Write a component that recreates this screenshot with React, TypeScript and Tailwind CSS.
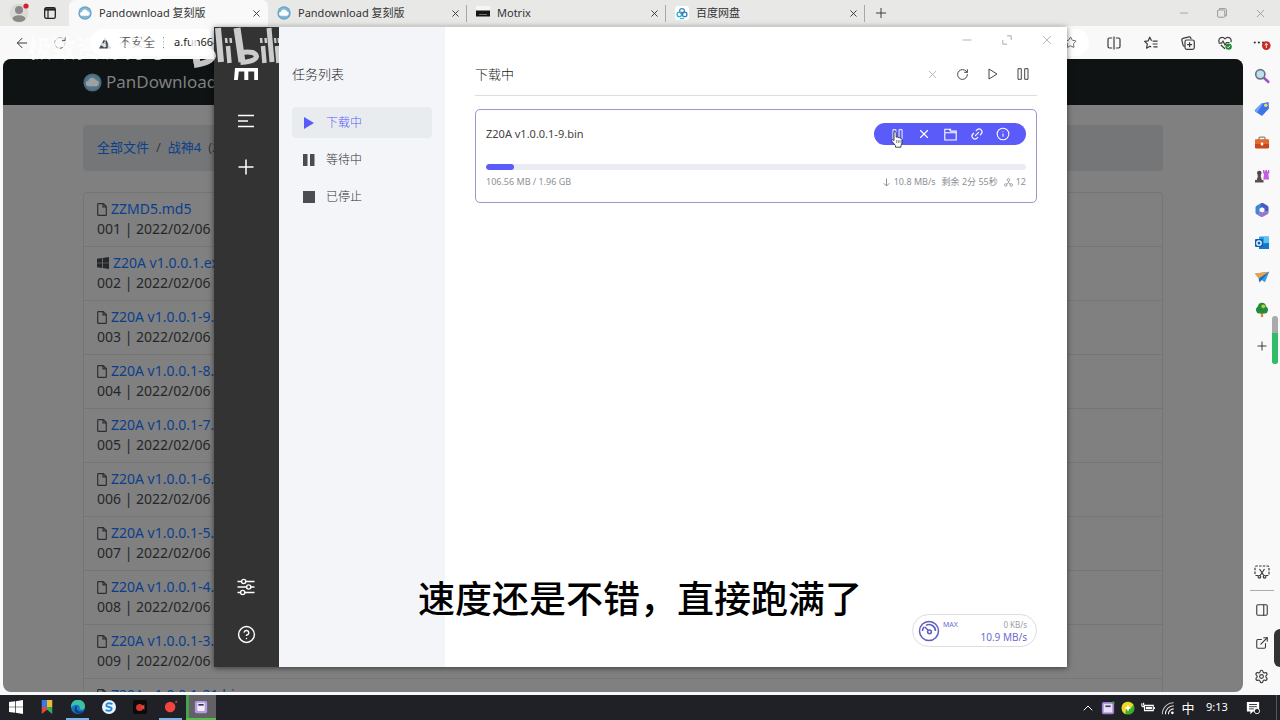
import React from "react";
import type { ReactNode } from "react";
import {
  ArrowLeft,
  ChevronUp,
  CircleHelp,
  ExternalLink,
  Info,
  Link2,
  Minus,
  PanelRight,
  Plus,
  RotateCw,
  Settings,
  Star,
  X,
} from "lucide-react";

const BLUE = "#5b5bfa";

function CloudLogo({ className }: { className: string }) {
  return (
    <svg viewBox="0 0 18 18" className={className} aria-hidden="true">
      <circle cx="9" cy="9" r="8.6" fill="#6aa5c9" />
      <circle cx="9" cy="9" r="7" fill="#84b8d6" />
      <path d="M5.3 12.6a2.5 2.5 0 0 1-.3-5 3.9 3.9 0 0 1 7.4-.7 2.9 2.9 0 0 1 .5 5.7z" fill="#fff" />
    </svg>
  );
}

function MotrixFavicon() {
  return (
    <svg viewBox="0 0 14 14" className="size-[14px]" aria-hidden="true">
      <rect width="14" height="5" fill="#f6f6f6" />
      <rect y="4.5" width="14" height="6" fill="#161616" />
      <path d="M3 8.5h8" stroke="#8a8a8a" strokeWidth=".8" />
    </svg>
  );
}

function NetdiskFavicon() {
  return (
    <svg viewBox="0 0 14 14" className="size-[14px]" aria-hidden="true">
      <rect width="14" height="14" rx="3" fill="#fff" />
      <g fill="none" strokeWidth="1.3">
        <circle cx="7" cy="5" r="2.4" stroke="#2f8fd8" />
        <circle cx="4.3" cy="8.4" r="2.2" stroke="#27b3c9" />
        <circle cx="9.7" cy="8.4" r="2.2" stroke="#2a80c9" />
      </g>
      <circle cx="7" cy="6.4" r="1" fill="#e2504c" />
      <path d="M5 12.6h4" stroke="#27a9c9" strokeWidth="1" />
    </svg>
  );
}

type Tab = { label: string; icon: ReactNode; active?: boolean };
const tabs: Tab[] = [
  { label: "Pandownload 复刻版", icon: <CloudLogo className="size-[14px]" />, active: true },
  { label: "Pandownload 复刻版", icon: <CloudLogo className="size-[14px]" /> },
  { label: "Motrix", icon: <MotrixFavicon /> },
  { label: "百度网盘", icon: <NetdiskFavicon /> },
];

function TabBar() {
  return (
    <header className="flex h-[26px] shrink-0 items-center bg-[#e8e8e7] text-[#333]">
      <button aria-label="用户" className="flex w-[38px] justify-center">
        <svg viewBox="0 0 20 20" className="size-5">
          <circle cx="10" cy="10" r="9.5" fill="#dcdad7" />
          <circle cx="10" cy="7" r="4" fill="#8b8986" />
          <ellipse cx="10" cy="15.6" rx="6.4" ry="3.4" fill="#8b8986" />
          <circle cx="17" cy="3" r="2.6" fill="#d5202c" />
        </svg>
      </button>
      <button aria-label="标签页操作" className="flex w-[31px] justify-start pl-[6px]">
        <svg viewBox="0 0 12 12" className="size-3" fill="none" stroke="#222">
          <rect x=".7" y=".7" width="10.6" height="10.6" rx="1.6" strokeWidth="1.3" />
          <path d="M1 2.4h10" strokeWidth="2.4" />
          <path d="M4 3v8" strokeWidth="1.2" />
        </svg>
      </button>
      <nav className="flex h-full items-center">
        {tabs.map((t, i) => (
          <div
            key={i}
            className={
              t.active
                ? "flex h-full w-[199px] items-center rounded-t-md bg-[#f9f9f9] pl-[9px] pr-[5px]"
                : "flex h-[17px] w-[199px] items-center border-r border-[#a8a8a8] pl-[9px] pr-[4px]"
            }
          >
            <button className="flex flex-1 items-center gap-[7px] text-left text-[11px]">
              {t.icon}
              {t.label}
            </button>
            <button aria-label="关闭标签页" className="p-px">
              <X className="size-[11px]" strokeWidth={2} />
            </button>
          </div>
        ))}
      </nav>
      <button aria-label="新建标签页" className="ml-[8px]">
        <Plus className="size-4" strokeWidth={1.4} />
      </button>
      <div className="ml-auto flex text-[#999]">
        <button aria-label="最小化" className="flex w-[38px] justify-center">
          <Minus className="size-3" strokeWidth={1.6} />
        </button>
        <button aria-label="还原" className="flex w-[38px] items-center justify-center">
          <svg viewBox="0 0 10 10" className="size-[10px]" fill="none" stroke="currentColor">
            <rect x=".6" y="2" width="7.2" height="7.2" rx="1" />
            <path d="M2.4 2V.6h5.8q1.2 0 1.2 1.2v6H8" />
          </svg>
        </button>
        <button aria-label="关闭" className="flex w-[39px] justify-center">
          <X className="size-[13px]" strokeWidth={1.6} />
        </button>
      </div>
    </header>
  );
}

function ToolButton({ label, children }: { label: string; children: ReactNode }) {
  return (
    <button aria-label={label} className="flex w-[37px] justify-center">
      {children}
    </button>
  );
}

function Toolbar() {
  return (
    <div className="flex h-[33px] shrink-0 items-center bg-[#f9f9f9] text-[#3b3b3b]">
      <button aria-label="返回" className="flex w-[44px] justify-center">
        <ArrowLeft className="size-4" strokeWidth={1.5} />
      </button>
      <button aria-label="刷新" className="flex w-[32px] justify-center">
        <RotateCw className="size-[14px]" strokeWidth={1.5} />
      </button>
      <div className="ml-[14px] mr-[6px] flex h-[27px] min-w-0 flex-1 items-center rounded-full bg-white pl-[9px] pr-[12px]">
        <svg viewBox="0 0 12 12" className="size-3 shrink-0">
          <path d="M6 .5 12 11.5H0z" fill="#4a4a4a" />
          <path d="M6 4.4v3.4M6 8.8v1.3" stroke="#fff" strokeWidth="1.2" />
        </svg>
        <span className="ml-[8px] shrink-0 text-[12px] text-[#666]">不安全</span>
        <span className="mx-[8px] h-3 border-l border-dashed border-[#888]" />
        <input
          aria-label="地址"
          defaultValue="a.fun66-"
          className="ml-[2px] min-w-0 flex-1 bg-transparent text-[11px] text-[#222] outline-none"
        />
        <Star className="size-[13px] shrink-0 text-[#666]" strokeWidth={1.8} />
      </div>
      <ToolButton label="分屏">
        <svg viewBox="0 0 14 14" className="size-[14px]" fill="none" stroke="currentColor" strokeWidth="1.2">
          <path d="M5.2 2H2.4Q1 2 1 3.4v7.2Q1 12 2.4 12h2.8M8.8 2h2.8Q13 2 13 3.4v7.2q0 1.4-1.4 1.4H8.8M7 .5v13" />
        </svg>
      </ToolButton>
      <ToolButton label="收藏夹">
        <svg viewBox="0 0 14 14" className="size-[14px]" fill="none" stroke="currentColor" strokeWidth="1.2" strokeLinejoin="round">
          <path d="M7.6 4.7 5.7 1.2 4.1 4.9.6 5.3l2.7 2.6-.7 4.3 3.2-1.9 1.4.8M8.6 5.2h5M8.6 8h5M9.4 10.8h4.2" />
        </svg>
      </ToolButton>
      <ToolButton label="集锦">
        <svg viewBox="0 0 14 14" className="size-[14px]" fill="none" stroke="currentColor" strokeWidth="1.2">
          <path d="M3.6 10.4Q2.2 10.4 2 9L.8 4Q.6 2.6 2 2.3L8 .9q1.4-.3 1.8 1.1l.2 1" />
          <rect x="4" y="4" width="9.3" height="9.3" rx="1.8" />
          <path d="M8.6 6.2v5M6.1 8.7h5" />
        </svg>
      </ToolButton>
      <ToolButton label="浏览器概要">
        <svg viewBox="0 0 14 14" className="size-[14px]" fill="none" stroke="currentColor" strokeWidth="1.2" strokeLinejoin="round">
          <path d="M1.2 6.2C-.2 2.5 4-.6 7 2.8c3-3.4 7.2-.3 5.800 3.400M.6 7.200h3L5 5l2 4 1.500-2.500h3M2.800 9 7 12.800" />
          <circle cx="10.6" cy="10.6" r="3.2" fill="#1c8a32" stroke="none" />
          <path d="m9 10.6 1.2 1.2 2-2.2" stroke="#fff" strokeWidth=".9" />
        </svg>
      </ToolButton>
      <ToolButton label="设置及其他">
        <svg viewBox="0 0 18 14" className="h-[14px] w-[18px]">
          <g fill="#333">
            <circle cx="1.8" cy="6.5" r="1.1" />
            <circle cx="5.9" cy="6.5" r="1.1" />
            <circle cx="10" cy="6.5" r="1.1" />
          </g>
          <circle cx="13.3" cy="9.6" r="4.3" fill="#c8281e" />
          <path d="M13.3 12V7.500m-1.600 1.600 1.600-1.600 1.600 1.600" fill="none" stroke="#fff" strokeWidth=".9" />
        </svg>
      </ToolButton>
    </div>
  );
}

const files = [
  { name: "ZZMD5.md5", windows: false },
  { name: "Z20A v1.0.0.1.exe", windows: true },
  { name: "Z20A v1.0.0.1-9.bin", windows: false },
  { name: "Z20A v1.0.0.1-8.bin", windows: false },
  { name: "Z20A v1.0.0.1-7.bin", windows: false },
  { name: "Z20A v1.0.0.1-6.bin", windows: false },
  { name: "Z20A v1.0.0.1-5.bin", windows: false },
  { name: "Z20A v1.0.0.1-4.bin", windows: false },
  { name: "Z20A v1.0.0.1-3.bin", windows: false },
  { name: "Z20A v1.0.0.1-21.bin", windows: false },
];

function FileIcon({ windows }: { windows: boolean }) {
  return windows ? (
    <svg viewBox="0 0 12 12" className="mr-[4px] size-3" fill="#26292c">
      <path d="M0 1.7 5 1v4.700H0zM5.700.9 12 0v5.700H5.700zM0 6.300h5V11l-5-.7zM5.700 6.300H12V12l-6.300-.9z" />
    </svg>
  ) : (
    <svg viewBox="0 0 10 13" className="mr-[4px] h-[13px] w-[10px]" fill="none" stroke="#2c2f32" strokeWidth="1.2">
      <path d="M.7 1.200q0-.6.6-.6h5l3 3v8.200q0 .6-.6.6H1.300q-.6 0-.6-.6zM6 .8v3.100h3.200" />
    </svg>
  );
}

function DimmedPage() {
  return (
    <main className="ml-[3px] min-w-0 flex-1 overflow-hidden rounded-lg bg-[#808080] text-[14px]">
      <div className="h-[46px] bg-[#0f1314]">
        <div className="mx-auto flex h-full w-full max-w-[1080px] items-center gap-[4px] text-[17px] text-[#808080]">
          <CloudLogo className="size-[19px] opacity-60" />
          PanDownload
        </div>
      </div>
      <div className="mx-auto w-full max-w-[1080px] pt-[20px]">
        <nav className="flex h-[46px] items-center gap-[7px] rounded bg-[#747677] px-[14px] text-[13px] text-[#0b3f8c]">
          <a href="#all">全部文件</a>
          <span className="text-[#36393d]">/</span>
          <a href="#game">战神4</a>
          <span className="text-[#36393d]">(2022)</span>
        </nav>
        <ul className="mt-[21px] rounded-t border border-b-0 border-[#757575]">
          {files.map((f, i) => (
            <li key={f.name} className="h-[54px] border-b border-[#757575] px-[13px] pt-[6px] leading-5">
              <a href={"#" + f.name} className="flex items-center text-[#0b3f8c]">
                <FileIcon windows={f.windows} />
                {f.name}
              </a>
              <p className="text-[#24272a]">{String(i + 1).padStart(3, "0")} | 2022/02/06 17:20</p>
            </li>
          ))}
        </ul>
      </div>
    </main>
  );
}

const sideApps: { label: string; art: ReactNode }[] = [
  {
    label: "搜索",
    art: (
      <>
        <path d="m9.5 9.5 4.700 4.300" stroke="#a24fd0" strokeWidth="2.6" strokeLinecap="round" />
        <circle cx="6.3" cy="6.3" r="4.6" fill="#bfe0f0" stroke="#6d7680" strokeWidth="1.7" />
      </>
    ),
  },
  {
    label: "购物",
    art: (
      <>
        <path d="m1 9 6.500-6.600L14.500 1l.5 6.600L8.500 14.500Q7.500 15 6.500 14L1.200 10.500Q.5 9.800 1 9z" fill="#3f74e8" />
        <path d="m1 9 6.500-6.600 1.800-.3L3 11.700l-1.800-1.200Q.5 9.800 1 9z" fill="#6fa4fa" />
        <circle cx="11.8" cy="4.2" r="1.7" fill="#f4dc4e" />
      </>
    ),
  },
  {
    label: "工具",
    art: (
      <>
        <path d="M5 5V3q0-.9.900-.9h4.200q.9 0 .9.900v2" fill="none" stroke="#84898c" strokeWidth="1.3" />
        <rect x="1" y="4.5" width="14" height="9" rx="1.2" fill="#c64a1c" />
        <path d="M1 4.500h14V9H1z" fill="#e46a2c" />
        <rect x="6.8" y="7.6" width="2.4" height="2.8" fill="#fff" />
      </>
    ),
  },
  {
    label: "游戏",
    art: (
      <>
        <path d="M9 2h1.400v1.400h1V2H13v1.400h1V2h1.300v3.500h-1l.7 6H9.300l.8-6H9z" fill="#c25ee0" />
        <circle cx="5.3" cy="5" r="2.3" fill="#4a4548" />
        <path d="M3.300 7h4l-.6 1 1.200 4H9.500v2.500H1V12h1.700l1.200-4z" fill="#57504f" />
      </>
    ),
  },
  {
    label: "Microsoft 365",
    art: (
      <g fill="none" strokeWidth="4" strokeLinejoin="round">
        <path d="M8 13 3.500 10.500v-5L8 3" stroke="#3f86d6" />
        <path d="M7 3.200 8.500 3l4 2.500v4" stroke="#4a5cbd" />
        <path d="M12.500 9v1.500L8 13l-3.500-2" stroke="#9478d4" />
      </g>
    ),
  },
  {
    label: "Outlook",
    art: (
      <>
        <rect x="5" y="1.5" width="10" height="12.5" rx="1" fill="#2aa0e8" />
        <path d="M10 1.500h5V8h-5z" fill="#59c5f7" />
        <path d="m5 9 10-1v6H5z" fill="#1478c8" />
        <rect x="1" y="4" width="8" height="8" rx="1" fill="#0d5fb0" />
        <circle cx="5" cy="8" r="2.2" fill="none" stroke="#fff" strokeWidth="1.3" />
      </>
    ),
  },
  {
    label: "Drop",
    art: (
      <>
        <path d="m1 4.500 14.200-1.700L11 13.300 7.500 11l-2 2.200-.9-4z" fill="#3b9be0" />
        <path d="M1 4.500 15.200 2.800 4.600 9.200z" fill="#ef9f44" />
        <path d="M15.200 2.800 5.500 13.200l-.6-3.500z" fill="#1d6bb6" />
      </>
    ),
  },
  {
    label: "种树",
    art: (
      <>
        <path d="M6.800 10h2.400v5H6.800z" fill="#e08a32" />
        <path d="M8 .8a4.500 4.500 0 0 1 4.200 3.700A3.800 3.800 0 0 1 11 11.500H5A3.800 3.800 0 0 1 3.800 4.500 4.500 4.500 0 0 1 8 .8z" fill="#248a3c" />
        <circle cx="9.3" cy="4.3" r="1.9" fill="#b6cf3a" />
      </>
    ),
  },
];

function EdgeSidebar() {
  return (
    <aside className="flex w-[37px] shrink-0 flex-col items-center bg-[#f9f9f9] text-[#3b3b3b]">
      <div className="mt-[9px] flex h-[250px] flex-col justify-between">
        {sideApps.map((a) => (
          <button key={a.label} aria-label={a.label}>
            <svg viewBox="0 0 16 16" className="size-4" fill="none">
              {a.art}
            </svg>
          </button>
        ))}
      </div>
      <button aria-label="添加" className="mt-[21px]">
        <Plus className="size-[14px]" strokeWidth={1.7} />
      </button>
      <button aria-label="截图" className="mt-auto">
        <svg viewBox="0 0 16 14" className="h-[14px] w-4" fill="none" stroke="currentColor" strokeWidth="1.2">
          <path d="M4 10.500H2.500Q1 10.500 1 9V2.500Q1 1 2.500 1h11Q15 1 15 2.500V9q0 1.500-1.500 1.500H12" strokeDasharray="2.5 1.2" />
          <path d="m5.500 4 4.300 6.500M10.500 4l-4.300 6.500" />
          <circle cx="5.4" cy="11.8" r="1.3" />
          <circle cx="10.6" cy="11.8" r="1.3" />
        </svg>
      </button>
      <div className="mb-[12px] mt-[11px] w-[24px] border-t border-[#aaa]" />
      <div className="mb-[8px] flex flex-col items-center gap-[19px]">
        <button aria-label="侧栏">
          <PanelRight className="size-[14px]" strokeWidth={1.9} />
        </button>
        <button aria-label="外部打开">
          <ExternalLink className="size-[14px]" strokeWidth={1.9} />
        </button>
        <button aria-label="设置">
          <Settings className="size-[15px]" strokeWidth={1.8} />
        </button>
      </div>
    </aside>
  );
}

function TaskPause({ className }: { className: string }) {
  return (
    <svg viewBox="0 0 12 12" className={className} fill="none" stroke="currentColor">
      <path d="M1 .7h3.300v10.600H1zM7.700.7H11v10.600H7.700z" />
    </svg>
  );
}

function Rail() {
  return (
    <div className="flex w-[65px] shrink-0 flex-col items-center bg-[#333] pr-px text-white">
      <svg viewBox="0 0 24 12" className="mt-[41px] h-3 w-6" aria-label="Motrix">
        <path d="M1 0H24v12h-3.800V3.500h-5.900V12h-4V3.500H4.800L3.800 12H0z" fill="#fff" />
      </svg>
      <button aria-label="任务" className="mt-[33px]">
        <svg viewBox="0 0 18 16" className="h-4 w-[18px]" stroke="#fff" strokeWidth="1.6">
          <path d="M1 2.500h16M1 8h10M1 13.500h16" />
        </svg>
      </button>
      <button aria-label="新建任务" className="mt-[30px]">
        <svg viewBox="0 0 16 16" className="size-4" stroke="#fff" strokeWidth="1.5">
          <path d="M8 .5v15M.5 8h15" />
        </svg>
      </button>
      <button aria-label="偏好设置" className="mt-auto">
        <svg viewBox="0 0 18 18" className="size-[18px]" fill="none" stroke="#fff" strokeWidth="1.4">
          <path d="M.5 3.500h4M9 3.500h8.500M.5 9h9M14 9h3.500M.5 14.500h3M8 14.500h9.500" />
          <circle cx="6.7" cy="3.5" r="2.1" />
          <circle cx="11.7" cy="9" r="2.1" />
          <circle cx="5.7" cy="14.5" r="2.1" />
        </svg>
      </button>
      <button aria-label="帮助" className="mb-[23px] mt-[29px]">
        <CircleHelp className="size-[19px]" strokeWidth={1.8} />
      </button>
    </div>
  );
}

function TaskNav() {
  return (
    <nav className="w-[166px] shrink-0 bg-[#f4f5f8] px-[13px] pt-[37px] font-light text-[#303133]">
      <h2 className="text-[13px] leading-5 text-[#222]">任务列表</h2>
      <div className="mt-[23px] flex flex-col gap-[6px] text-[12px]">
        <button className="flex h-[31px] items-center rounded-sm bg-[#e9ecef] pl-[11px] text-[#5b5bfa]">
          <svg viewBox="0 0 12 12" className="mr-[11px] size-3" fill={BLUE}>
            <path d="M1 0v12l10-6z" />
          </svg>
          下载中
        </button>
        <button className="flex h-[31px] items-center pl-[11px]">
          <svg viewBox="0 0 12 12" className="mr-[11px] size-3" fill="#4a4c51">
            <path d="M0 0h4.500v12H0zM7 0h4.500v12H7z" />
          </svg>
          等待中
        </button>
        <button className="flex h-[31px] items-center pl-[11px]">
          <svg viewBox="0 0 12 12" className="mr-[11px] size-3" fill="#4a4c51">
            <path d="M0 0h12v12H0z" />
          </svg>
          已停止
        </button>
      </div>
    </nav>
  );
}

function HandCursor() {
  return (
    <svg viewBox="0 0 12 17" className="h-[17px] w-3" aria-hidden="true">
      <path
        d="M3 9.500V1.800Q3 .6 4.100.6t1.100 1.200v4.300q1.200-.6 1.900.4 1.200-.5 1.800.6 1.600-.3 2 1.200v3.200q0 1.500-.9 2.800v1.900H4.500v-1.600L.9 10.300q-.7-1.100.2-1.600.8-.4 1.900.8z"
        fill="#fff"
        stroke="#222"
        strokeWidth=".8"
      />
      <path d="M5.600 9v3M7.300 9v3M9 9v3" stroke="#444" strokeWidth=".6" />
    </svg>
  );
}

function TaskCard() {
  const done = 5.2;
  return (
    <article className="mt-[13px] rounded-[5px] border border-[#9c98cf] px-[10px] pb-[13px] pt-[13px]">
      <div className="flex h-[22px] items-center justify-between">
        <h3 className="text-[11px] text-[#444]">Z20A v1.0.0.1-9.bin</h3>
        <div className="flex h-[22px] items-center rounded-full bg-[#5b5bfa] px-[10px] text-white">
          <button aria-label="暂停任务" className="relative flex w-[26px] justify-center">
            <TaskPause className="size-[11px]" />
            <span className="absolute left-[7px] top-[2px]">
              <HandCursor />
            </span>
          </button>
          <button aria-label="删除任务" className="flex w-[27px] justify-center">
            <X className="size-[14px]" strokeWidth={1.9} />
          </button>
          <button aria-label="打开文件夹" className="flex w-[26px] justify-center">
            <svg viewBox="0 0 13 13" className="size-[13px]" fill="none" stroke="#fff" strokeWidth="1.1">
              <path d="M.8 12V1.200h4.400l1.400 1.900h5.600V12zM.8 4.700h11.400M5.200 1.200h2" />
            </svg>
          </button>
          <button aria-label="复制链接" className="flex w-[27px] justify-center">
            <Link2 className="size-[14px] -rotate-45" strokeWidth={1.9} />
          </button>
          <button aria-label="任务详情" className="flex w-[26px] justify-center">
            <Info className="size-[14px]" strokeWidth={1.8} />
          </button>
        </div>
      </div>
      <div className="mt-[19px] h-[6px] overflow-hidden rounded-full bg-[#ebecf3]">
        <div className="h-full rounded-full bg-[#5b5bfa]" style={{ width: `${done}%` }} />
      </div>
      <div className="mt-[5px] flex h-[14px] items-center justify-between text-[9px] text-[#8d9095]">
        <span>106.56 MB / 1.96 GB</span>
        <span className="flex items-center gap-[6px]">
          <span className="flex items-center gap-[4px]">
            <svg viewBox="0 0 7 9" className="h-[9px] w-[7px]" fill="none" stroke="currentColor">
              <path d="M3.500.5v7.500M.8 5.300l2.700 2.700 2.700-2.700" />
            </svg>
            10.8 MB/s
          </span>
          <span>剩余 2分 55秒</span>
          <span className="flex items-center gap-[3px]">
            <svg viewBox="0 0 9 9" className="size-[9px]" fill="none" stroke="currentColor" strokeWidth=".8">
              <circle cx="4.500" cy="1.8" r="1.3" />
              <circle cx="1.8" cy="7" r="1.3" />
              <circle cx="7.2" cy="7" r="1.3" />
              <path d="M4.500 3.100v1.700L2.500 6M4.500 4.800l2 1.200" />
            </svg>
            12
          </span>
        </span>
      </div>
    </article>
  );
}

function SpeedBadge() {
  return (
    <div className="mb-[20px] mt-auto flex h-[33px] w-[125px] self-end rounded-full border border-[#dddde2] bg-white pl-[5px] pr-[9px]">
      <svg viewBox="0 0 22 22" className="mt-[5px] size-[22px]" fill="none" stroke="#5f5fc0" strokeWidth="1.5">
        <circle cx="11" cy="11" r="9.5" />
        <path d="M4.500 11A6.500 6.500 0 0 1 6 7M8 5.300A6.500 6.500 0 0 1 17.500 11" />
        <circle cx="11.5" cy="11.8" r="1.9" />
        <path d="M10.200 10.300 6.500 6.800" />
      </svg>
      <span className="ml-[3px] mt-[6px] text-[7px] leading-[8px] text-[#6b6bd0]">MAX</span>
      <div className="ml-auto flex flex-col items-end pt-[4px]">
        <span className="text-[8px] leading-[12px] text-[#9a9ca1]">0 KB/s</span>
        <span className="text-[10px] leading-[12px] text-[#6b6bd0]">10.9 MB/s</span>
      </div>
    </div>
  );
}

function MotrixWindow() {
  return (
    <section
      aria-label="Motrix"
      className="absolute bottom-[53px] left-[214px] right-[213px] top-[27px] flex bg-white shadow-[0_1px_6px_rgba(0,0,0,0.55)]"
    >
      <Rail />
      <TaskNav />
      <div className="flex min-w-0 flex-1 flex-col">
        <div className="flex h-[26px] shrink-0 items-center justify-end text-[#aaa]">
          <button aria-label="最小化窗口" className="flex w-10 justify-center">
            <Minus className="size-[14px]" strokeWidth={1.5} />
          </button>
          <button aria-label="最大化窗口" className="flex w-10 justify-center">
            <svg viewBox="0 0 10 10" className="size-[10px]" fill="none" stroke="currentColor">
              <path d="M5 .8h4.200V5M5 9.200H.8V5" />
            </svg>
          </button>
          <button aria-label="关闭窗口" className="flex w-10 justify-center">
            <X className="size-[14px]" strokeWidth={1.5} />
          </button>
        </div>
        <div className="flex flex-1 flex-col px-[30px]">
          <div className="flex h-[43px] shrink-0 items-center border-b border-[#dcdee4]">
            <h1 className="pt-px text-[13px] font-light text-[#222]">下载中</h1>
            <div className="-mr-px ml-auto flex text-[#444]">
              <button aria-label="删除所选" className="flex w-[30px] justify-center text-[#aaa]">
                <X className="size-[13px]" strokeWidth={1.5} />
              </button>
              <button aria-label="刷新列表" className="flex w-[31px] justify-center">
                <RotateCw className="size-[13px]" strokeWidth={1.8} />
              </button>
              <button aria-label="全部开始" className="flex w-[30px] justify-center">
                <svg viewBox="0 0 12 12" className="size-3" fill="none" stroke="currentColor" strokeLinejoin="round">
                  <path d="M2 1v10l8-5z" />
                </svg>
              </button>
              <button aria-label="全部暂停" className="flex w-[30px] justify-center">
                <TaskPause className="size-3" />
              </button>
            </div>
          </div>
          <TaskCard />
          <SpeedBadge />
        </div>
      </div>
    </section>
  );
}

function Watermark() {
  return (
    <div className="pointer-events-none absolute left-[28px] top-[27px] flex items-center text-white" aria-hidden="true">
      <span className="w-[160px] text-[24px] font-bold leading-[42px] opacity-80">极致资源分享</span>
      <svg viewBox="0 0 92 42" className="h-[42px] w-[92px] opacity-75" fill="none" stroke="#fff" strokeWidth="4.5">
        <path d="m4 2 5 34" strokeWidth="7" />
        <path d="M8 25q16-4 17 4-2 7-19 9" strokeWidth="6" />
        <path d="m30 1 3 34" strokeWidth="6" />
        <path d="m40 19 1.500 17" />
        <path d="m38 11 .5 5M42.500 11l.5 5" strokeWidth="2.5" />
        <path d="m49 1 5 34" strokeWidth="7" />
        <path d="M53 25.500q15-2 15.500 4-1 5-16 6" strokeWidth="5" />
        <path d="m75 19 1.500 17" />
        <path d="m73 11 .5 5M77.500 11l.5 5" strokeWidth="2.5" />
        <path d="m81 1 3 34" strokeWidth="5" />
        <path d="m89 19 1.500 17" />
        <path d="m87 11 .5 5M90.500 11l.5 5" strokeWidth="2.2" />
      </svg>
    </div>
  );
}

function TaskIcon({ label, className, children }: { label: string; className: string; children: ReactNode }) {
  return (
    <button aria-label={label} className={className}>
      <svg viewBox="0 0 16 16" className="size-[14px]">
        {children}
      </svg>
    </button>
  );
}

const cell = "flex h-full w-[31px] items-center justify-center border-b-2 border-transparent";
const openCell = "mx-[4px] flex h-full w-[23px] items-center justify-center border-b-2 border-[#78b4e8]";

function Taskbar() {
  return (
    <footer className="flex h-[25px] shrink-0 items-center bg-[#202127] text-white">
      <TaskIcon label="开始" className={cell}>
        <path d="m0 2.400 7-1v6.200H0zM7.800 1.300 16 0v7.600H7.800zM0 8.400h7v6.200l-7-1zM7.800 8.400H16V16l-8.200-1.300z" fill="#fff" />
      </TaskIcon>
      <TaskIcon label="书签" className={cell}>
        <path d="M2 0h6v8H2z" fill="#3978e6" />
        <path d="M8 0h6v8H8z" fill="#f2bd2c" />
        <path d="M2 8h6v3l-6 5z" fill="#e4483c" />
        <path d="M8 8h6v8l-6-5z" fill="#3aaa58" />
      </TaskIcon>
      <TaskIcon label="Edge" className={openCell}>
        <circle cx="8" cy="8" r="8" fill="#1778c8" />
        <path d="M0 7.500a8 8 0 0 1 16 0q0 3.500-3.500 3.500-3.500 0-2.500-2 .3-3.500-4-3.700Q2 5.400 0 9z" fill="#3cc0a6" />
        <path d="M7 7.500q-2 4.500 3 5.500 2.500.3 4.500-1-2.500 3.800-7 3.500-5-2-3-7Q5.500 6.500 7 7.500z" fill="#123f7c" />
      </TaskIcon>
      <TaskIcon label="搜狗" className={cell}>
        <circle cx="8" cy="8" r="8" fill="#e9f4fc" />
        <path d="M12 4.500Q5 2.500 5 6q0 1.500 3 2t3 2q0 3.500-7 1.500" fill="none" stroke="#2487d8" strokeWidth="2.2" />
      </TaskIcon>
      <TaskIcon label="录制" className={cell}>
        <rect width="16" height="16" rx="2" fill="#0d0a0b" />
        <circle cx="7.5" cy="8.5" r="4" fill="#d8362e" />
        <path d="m9 8 4-3v6z" fill="#e0503f" />
      </TaskIcon>
      <TaskIcon label="录屏" className={openCell}>
        <circle cx="7" cy="8" r="6" fill="#f0443d" />
        <path d="m13 3 2-1.500" stroke="#c7443b" strokeWidth="2" />
      </TaskIcon>
      <div className="flex h-full w-[30px] border-b-2 border-[#4fc04a] bg-[#626266]">
        <span className="w-[3px] bg-[#46a34b]" />
        <TaskIcon label="Motrix" className="flex flex-1 items-center pl-[5px]">
          <rect x="1" y="1" width="14" height="14" rx="2" fill="#b49be0" />
          <rect x="3.800" y="3" width="8.400" height="9.5" rx="1" fill="#f2eefb" />
          <path d="M5 4.500h6v2H5z" fill="#3b3454" />
        </TaskIcon>
      </div>
      <div className="ml-auto flex items-center">
        <button aria-label="显示隐藏的图标" className="flex w-[20px] justify-center">
          <ChevronUp className="size-4" strokeWidth={1.5} />
        </button>
        <TaskIcon label="Motrix 托盘" className="flex w-[20px] justify-center">
          <rect x="2" y="2" width="12" height="12" rx="1" fill="#e7e0f5" stroke="#9b7fd0" strokeWidth="2" />
          <path d="M5 5h6v2H5z" fill="#4a3f66" />
          <circle cx="14" cy="2" r="1.5" fill="#35b34a" />
        </TaskIcon>
        <TaskIcon label="安全中心" className="flex w-[20px] justify-center">
          <circle cx="8" cy="8" r="7.5" fill="#3fae2c" />
          <path d="M1 6a7.500 7.500 0 0 1 13-2q-1 4-5 4t-4 7Q0 12 1 6z" fill="#f4d425" />
          <path d="M8 5v6M5 8h6" stroke="#fff" strokeWidth="1.8" />
        </TaskIcon>
        <TaskIcon label="电池" className="flex w-[20px] justify-center">
          <path d="M4 5h10v6H4zM1 2.500v3q0 1 1 1h2M3 2v3" fill="none" stroke="#fff" strokeWidth="1.3" />
          <path d="M5.500 6.500h7v3h-7zM14.500 7h1.500v2h-1.500z" fill="#fff" />
        </TaskIcon>
        <TaskIcon label="网络" className="flex w-[20px] justify-center">
          <g fill="none" stroke="#fff" strokeWidth="1.2">
            <path d="M1.500 15A13 13 0 0 1 14.500 2" opacity=".7" />
            <path d="M5 15a9.500 9.500 0 0 1 9.500-9.500M8.500 15a6 6 0 0 1 6-6" />
          </g>
          <circle cx="13" cy="13.5" r="1.5" fill="#fff" />
        </TaskIcon>
        <button className="w-[20px] text-[13px] leading-5">中</button>
        <time className="w-[38px] text-center text-[11px]">9:13</time>
        <TaskIcon label="通知" className="flex w-[34px] justify-center">
          <path d="M1 1h14v11H8l-3 3v-3H1z" fill="#fff" />
          <path d="M3.500 4h9M3.500 6.500h9M3.500 9H9" stroke="#202127" />
          <circle cx="12.5" cy="11.5" r="3" fill="#202127" stroke="#fff" />
        </TaskIcon>
        <span className="ml-[6px] mr-[3px] h-[25px] w-px bg-[#55565c]" />
      </div>
    </footer>
  );
}

export default function App() {
  return (
    <div className="relative flex h-screen flex-col overflow-hidden bg-[#f9f9f9] font-['Noto_Sans','Noto_Sans_CJK_SC',sans-serif]">
      <TabBar />
      <Toolbar />
      <div className="flex min-h-0 flex-1 pb-[3px]">
        <DimmedPage />
        <EdgeSidebar />
      </div>
      <Taskbar />
      <MotrixWindow />
      <Watermark />
      <div className="absolute right-[2px] top-[316px] h-[48px] w-[6px] overflow-hidden rounded-full bg-[#aaa]">
        <div className="mt-[17px] h-[31px] bg-[#2fbd68]" />
      </div>
      <div className="absolute right-0 top-[629px] h-[38px] w-[6px] rounded-l-full bg-[#333]" />
      <p className="pointer-events-none absolute inset-x-0 top-[572px] text-center text-[37px] font-medium leading-[54px] text-black">
        速度还是不错，直接跑满了
      </p>
    </div>
  );
}
